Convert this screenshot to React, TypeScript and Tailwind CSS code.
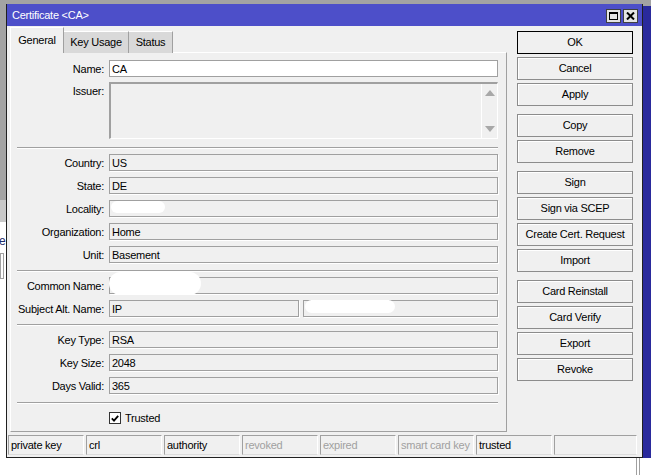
import React from "react";

const buttonGroups: string[][] = [
  ["OK", "Cancel", "Apply"],
  ["Copy", "Remove"],
  ["Sign", "Sign via SCEP", "Create Cert. Request", "Import"],
  ["Card Reinstall", "Card Verify", "Export", "Revoke"],
];

const statusCells = [
  { label: "private key", on: true },
  { label: "crl", on: true },
  { label: "authority", on: true },
  { label: "revoked", on: false },
  { label: "expired", on: false },
  { label: "smart card key", on: false },
  { label: "trusted", on: true },
];

function Label({ text }: { text: string }) {
  return (
    <div className="w-[94px] h-[17px] shrink-0 text-right pr-[1px] leading-[18px]">
      {text}:
    </div>
  );
}

function Field({
  value,
  width = "w-[389px]",
  blob,
}: {
  value?: string;
  width?: string;
  blob?: string;
}) {
  return (
    <div
      className={`relative h-[17px] ${width} border border-[#a0a0a0] bg-[#f0f0f0] pl-[2px] leading-[16px] shadow-[1px_1px_0_#ffffff]`}
    >
      {value}
      {blob && <span className={`absolute bg-white rounded-full ${blob}`} />}
    </div>
  );
}

function Row({ label, children, className = "" }: { label: string; children: React.ReactNode; className?: string }) {
  return (
    <div className={`flex items-start gap-[4px] ${className}`}>
      <Label text={label} />
      {children}
    </div>
  );
}

function Separator({ className = "" }: { className?: string }) {
  return (
    <div className={`ml-[6px] w-[481px] h-[2px] border-t border-[#a0a0a0] border-b border-b-white ${className}`} />
  );
}

export default function App() {
  return (
    <div className="relative w-[651px] h-[475px] overflow-hidden bg-[#a3a3a3] font-['Liberation_Sans',Arial,sans-serif] text-[11px] tracking-[-0.25px] text-black">
      {/* desktop behind the dialog */}
      <div className="absolute left-0 top-[200px] w-[8px] h-[22px] bg-[#c8c8c8]" />
      <div className="absolute left-0 top-[222px] w-[8px] h-[253px] bg-white">
        <div className="mt-[12px] -ml-[1px] text-[#1f2d6b] text-[12px] leading-[14px]">e</div>
        <div className="mt-[5px] w-[4px] h-[26px] border border-[#a0a0a0]" />
      </div>
      <div className="absolute left-0 top-[458px] w-[651px] h-[17px] bg-white">
        <div className="absolute left-[636px] top-0 w-[1px] h-full bg-[#a0a0a0]" />
        <div className="absolute left-[639px] top-0 w-[1px] h-full bg-[#a0a0a0]" />
      </div>
      <div className="absolute left-[643px] top-[6px] w-[8px] h-[452px] bg-[#2a2a9c]" />

      {/* dialog window */}
      <div className="absolute left-[6px] top-[4px] w-[637px] h-[454px] border-l border-r border-b border-[#202020] flex flex-col">
        <div className="h-[22px] bg-[#4d4fc9] flex items-center pl-[5px] pr-[4px] pt-[1px] text-white">
          <span className="flex-1">Certificate &lt;CA&gt;</span>
          <div className="w-[15px] h-[14px] bg-[#e4e4e4] border border-[#404040] flex items-center justify-center">
            <div className="w-[9px] h-[8px] border border-black border-t-2" />
          </div>
          <div className="ml-[2px] w-[15px] h-[14px] bg-[#e4e4e4] border border-[#404040] flex items-center justify-center">
            <svg width="9" height="8" viewBox="0 0 9 8">
              <path d="M1 0.5 L8 7.5 M8 0.5 L1 7.5" stroke="#000" strokeWidth="2" />
            </svg>
          </div>
        </div>

        <div className="flex-1 bg-[#f0f0f0] flex flex-col">
          <div className="flex">
            <div className="pl-[3px] pt-[1px]">
              <div className="flex items-end h-[26px] -mb-[1px] relative z-10">
                <div className="h-[26px] w-[54px] bg-[#f0f0f0] border-t border-l border-white border-r border-r-[#a0a0a0] flex items-center justify-center pb-[1px]">
                  General
                </div>
                <div className="h-[22px] w-[65px] bg-[#d9d9d9] border-t border-white border-r border-r-[#a0a0a0] flex items-center justify-center">
                  Key Usage
                </div>
                <div className="h-[22px] w-[44px] bg-[#d9d9d9] border-t border-white border-r border-r-[#a0a0a0] flex items-center justify-center">
                  Status
                </div>
              </div>

              <div className="w-[497px] h-[380px] border-l border-t border-white border-r border-b border-r-[#a0a0a0] border-b-[#a0a0a0] pt-[7px]">
                <Row label="Name">
                  <div className="h-[17px] w-[389px] border border-[#a0a0a0] bg-white pl-[2px] leading-[16px]">CA</div>
                </Row>
                <Row label="Issuer" className="mt-[5px]">
                  <div className="relative h-[57px] w-[389px] border-t-2 border-l-2 border-[#a0a0a0] border-r border-b border-r-white border-b-white bg-[#f0f0f0]">
                    <div className="absolute right-0 top-0 bottom-0 w-[16px] border-l border-white flex flex-col items-center justify-between py-[6px]">
                      <svg width="10" height="6" viewBox="0 0 10 6"><path d="M5 0 L10 6 L0 6 Z" fill="#a8a8a8" /></svg>
                      <svg width="10" height="6" viewBox="0 0 10 6"><path d="M0 0 L10 0 L5 6 Z" fill="#a8a8a8" /></svg>
                    </div>
                  </div>
                </Row>

                <Separator className="mt-[8px]" />

                <Row label="Country" className="mt-[5px]"><Field value="US" /></Row>
                <Row label="State" className="mt-[6px]"><Field value="DE" /></Row>
                <Row label="Locality" className="mt-[6px]">
                  <Field blob="left-[1px] top-[0px] w-[54px] h-[12px]" />
                </Row>
                <Row label="Organization" className="mt-[6px]"><Field value="Home" /></Row>
                <Row label="Unit" className="mt-[6px]"><Field value="Basement" /></Row>

                <Separator className="mt-[7px]" />

                <Row label="Common Name" className="mt-[5px]">
                  <Field blob="left-[-1px] top-[-6px] w-[92px] h-[23px]" />
                </Row>
                <Row label="Subject Alt. Name" className="mt-[6px]">
                  <div className="flex gap-[4px]">
                    <Field value="IP" width="w-[190px]" />
                    <Field width="w-[195px]" blob="left-[1px] top-[-1px] w-[90px] h-[13px]" />
                  </div>
                </Row>

                <Separator className="mt-[7px]" />

                <Row label="Key Type" className="mt-[5px]"><Field value="RSA" /></Row>
                <Row label="Key Size" className="mt-[6px]"><Field value="2048" /></Row>
                <Row label="Days Valid" className="mt-[6px]"><Field value="365" /></Row>

                <Separator className="mt-[8px]" />

                <div className="mt-[7px] ml-[98px] flex items-center gap-[4px]">
                  <div className="w-[12px] h-[12px] bg-white border border-[#333] flex items-center justify-center">
                    <svg width="8" height="7" viewBox="0 0 8 7">
                      <path d="M0.8 3.4 L3 5.6 L7.2 0.8" stroke="#000" strokeWidth="1.8" fill="none" />
                    </svg>
                  </div>
                  <span className="leading-[14px]">Trusted</span>
                </div>
              </div>
            </div>

            <div className="ml-[10px] pt-[5px] flex flex-col gap-[8px]">
              {buttonGroups.map((group, gi) => (
                <div key={gi} className="flex flex-col gap-[3px]">
                  {group.map((b) => (
                    <div
                      key={b}
                      className={`w-[116px] h-[23px] flex items-center justify-center bg-[#f0f0f0] border ${
                        b === "OK" ? "border-black" : "border-[#8c8c8c] shadow-[inset_1px_1px_0_#ffffff]"
                      }`}
                    >
                      {b}
                    </div>
                  ))}
                </div>
              ))}
            </div>
          </div>

          <div className="mt-[3px] pl-[1px] flex gap-[2px]">
            {statusCells.map((c) => (
              <div
                key={c.label}
                className={`w-[76px] h-[20px] overflow-hidden whitespace-nowrap border border-[#a0a0a0] border-r-white border-b-[#dcdcdc] pl-[2px] leading-[18px] ${
                  c.on ? "text-black" : "text-[#a0a0a0]"
                }`}
              >
                {c.label}
              </div>
            ))}
            <div className="w-[83px] h-[20px] border border-[#a0a0a0] border-r-white border-b-[#dcdcdc]" />
          </div>
        </div>
      </div>
    </div>
  );
}
